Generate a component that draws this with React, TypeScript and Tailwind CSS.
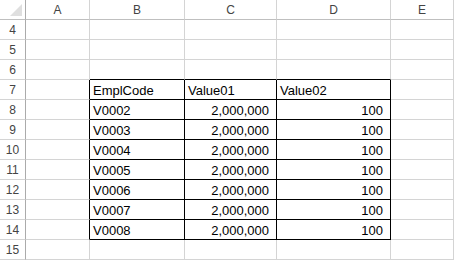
const COLS = ['A', 'B', 'C', 'D', 'E'];
const ROWS = [4, 5, 6, 7, 8, 9, 10, 11, 12, 13, 14, 15];

const DATA: Record<number, [string, string, string]> = {
  7: ['EmplCode', 'Value01', 'Value02'],
  8: ['V0002', '2,000,000', '100'],
  9: ['V0003', '2,000,000', '100'],
  10: ['V0004', '2,000,000', '100'],
  11: ['V0005', '2,000,000', '100'],
  12: ['V0006', '2,000,000', '100'],
  13: ['V0007', '2,000,000', '100'],
  14: ['V0008', '2,000,000', '100'],
};

const inTable = (r: number) => r >= 7 && r <= 14;

function Cell({ row, col }: { row: number; col: number }) {
  // col: 0=A .. 4=E
  const rightBlack = inTable(row) && col <= 3;
  const bottomBlack = col >= 1 && col <= 3 && row >= 6 && row <= 14;
  const values = DATA[row];
  const text = values && col >= 1 && col <= 3 ? values[col - 1] : '';
  const alignRight = row !== 7 && col >= 2;

  return (
    <div
      className={`flex items-end pb-[2px] text-[13px] leading-none text-black border-r border-b ${
        rightBlack ? 'border-r-black' : 'border-r-[#d4d4d4]'
      } ${bottomBlack ? 'border-b-black' : 'border-b-[#d4d4d4]'} ${
        alignRight ? 'justify-end pr-[7px]' : 'pl-[3px]'
      }`}
    >
      {text}
    </div>
  );
}

export default function App() {
  return (
    <div
      className="w-[454px] h-[260px] overflow-hidden bg-white"
      style={{ fontFamily: '"Liberation Sans", Arial, sans-serif' }}
    >
      <div className="grid grid-cols-[26px_64px_95px_92px_114px_63px] grid-rows-[20px_repeat(12,20px)]">
        {/* corner */}
        <div className="relative border-r border-b border-r-[#ababab] border-b-[#bfbfbf]">
          <svg className="absolute left-[10px] top-[4px]" width="12" height="12" viewBox="0 0 12 12">
            <polygon points="12,0 12,12 0,12" fill="#dfdfdf" />
          </svg>
        </div>
        {COLS.map(c => (
          <div
            key={c}
            className="flex items-center justify-center text-[12px] text-[#444] border-r border-b border-r-[#d4d4d4] border-b-[#bfbfbf]"
          >
            {c}
          </div>
        ))}

        {ROWS.map(r => (
          <div key={r} className="contents">
            <div className="flex items-end justify-center pb-[3px] text-[12px] leading-none text-[#444] border-r border-b border-r-[#ababab] border-b-[#d4d4d4]">
              {r}
            </div>
            {COLS.map((c, i) => (
              <Cell key={c} row={r} col={i} />
            ))}
          </div>
        ))}
      </div>
    </div>
  );
}
